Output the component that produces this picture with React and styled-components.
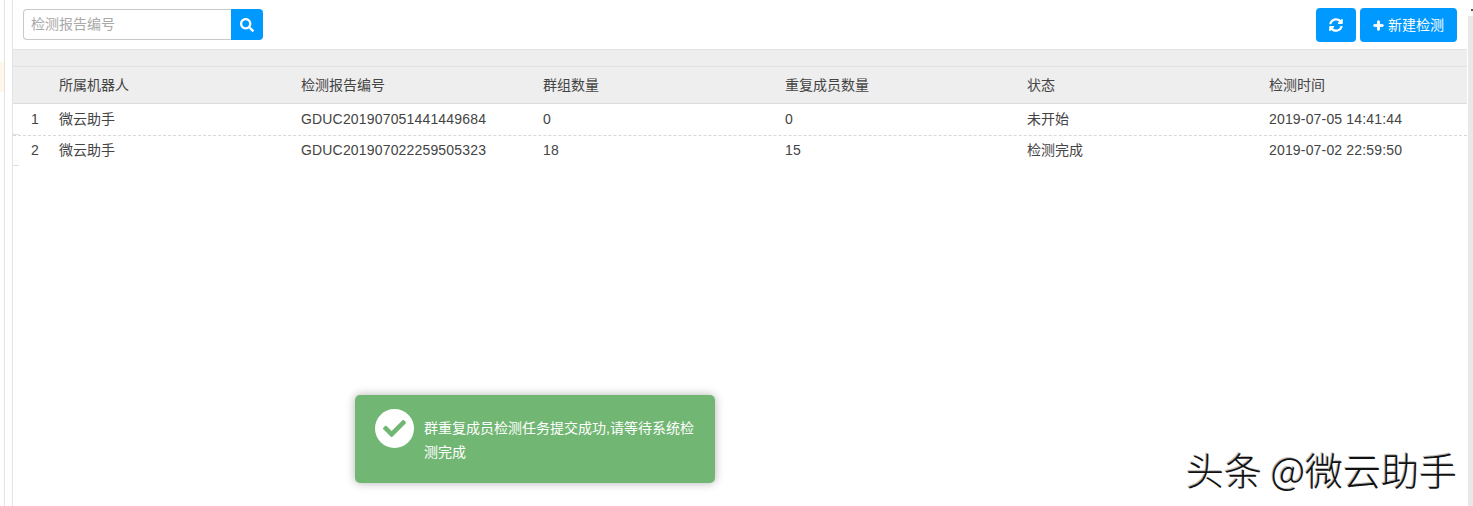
import React from 'react'
import styled, { createGlobalStyle } from 'styled-components'
import { FaSearch, FaSyncAlt, FaPlus, FaCheck } from 'react-icons/fa'

const GlobalStyle = createGlobalStyle`
  html, body {
    margin: 0;
    padding: 0;
    height: 100%;
    overflow: hidden;
    background: #fff;
  }
  body {
    font-family: "Liberation Sans", "Noto Sans CJK SC", sans-serif;
    font-size: 14px;
    color: #444;
  }
`

const Page = styled.div`
  position: relative;
  display: flex;
  width: 1473px;
  height: 506px;
  overflow: hidden;
`

const Gutter = styled.div`
  position: relative;
  flex: 0 0 13px;
  box-sizing: border-box;
  border-right: 1px solid #e3e3e3;
  &::before {
    content: '';
    position: absolute;
    left: 4px;
    top: 0;
    bottom: 0;
    width: 1px;
    background: #e3e3e3;
  }
  &::after {
    content: '';
    position: absolute;
    left: 0;
    top: 62px;
    width: 4px;
    height: 30px;
    background: #fff8ea;
  }
`

const Main = styled.main`
  flex: 1;
  min-width: 0;
`

const Scrollbar = styled.div`
  position: relative;
  flex: 0 0 5px;
  margin-left: 1px;
  background: #e8e8e8;
  &::before {
    content: '';
    position: absolute;
    left: 0;
    right: 0;
    top: 0;
    height: 16px;
    background: #fff;
  }
  &::after {
    content: '';
    position: absolute;
    right: 0;
    top: 9px;
    width: 2px;
    height: 2px;
    background: #555;
  }
`

const Toolbar = styled.div`
  box-sizing: border-box;
  height: 50px;
  padding: 8px 10px 0 10px;
  display: flex;
  justify-content: space-between;
  align-items: flex-start;
  border-bottom: 1px solid #e2e2e2;
`

const SearchBox = styled.div`
  display: flex;
  margin-top: 1px;
  width: 240px;
  height: 31px;
`

const SearchInput = styled.input`
  box-sizing: border-box;
  flex: 1;
  min-width: 0;
  height: 31px;
  padding: 0 7px 2px;
  border: 1px solid #c9c9c9;
  border-right: none;
  border-radius: 4px 0 0 4px;
  outline: none;
  font: inherit;
  font-size: 14px;
  color: #444;
  &::placeholder {
    color: #a9a9a9;
    opacity: 1;
  }
`

const SearchButton = styled.button`
  flex: 0 0 32px;
  height: 31px;
  padding: 0;
  border: none;
  border-radius: 0 4px 4px 0;
  background: #0099ff;
  color: #fff;
  font-size: 14px;
  display: flex;
  align-items: center;
  justify-content: center;
`

const Actions = styled.div`
  display: flex;
  gap: 4px;
`

const ActionButton = styled.button`
  box-sizing: border-box;
  height: 34px;
  width: ${props => props.$width};
  padding: 0;
  border: none;
  border-radius: 4px;
  background: #0099ff;
  color: #fff;
  font: inherit;
  font-size: 14px;
  display: flex;
  align-items: center;
  justify-content: center;
  gap: 4px;
`

const ButtonLabel = styled.span`
  padding-bottom: 2px;
`

const Band = styled.div`
  box-sizing: border-box;
  height: 17px;
  background: #eeeeee;
  border-bottom: 1px solid #e2e2e2;
`

const Row = styled.div`
  display: grid;
  grid-template-columns: 46px repeat(5, 242px) 1fr;
  align-items: center;
  box-sizing: border-box;
  height: ${props => props.$height};
  padding-bottom: ${props => props.$head ? '0' : '2px'};
  background: ${props => props.$head ? '#eeeeee' : '#fff'};
  border-bottom: ${props => props.$head ? '1px solid #dcdcdc' : props.$last ? 'none' : '1px dashed #d8d8d8'};
`

const Cell = styled.div`
  white-space: nowrap;
  color: #444;
  letter-spacing: ${props => props.$latin ? '0.17px' : '0'};
  padding-bottom: ${props => props.$latin ? '0' : '2px'};
`

const IndexCell = styled(Cell)`
  padding-left: 18px;
`

const Toast = styled.div`
  position: absolute;
  left: 355px;
  top: 395px;
  box-sizing: border-box;
  width: 360px;
  height: 88px;
  padding: 14px 20px;
  display: flex;
  gap: 10px;
  background: #72b674;
  border-radius: 5px;
  box-shadow: 0 0 10px rgba(0, 0, 0, 0.3);
  color: #fff;
  font-size: 14px;
  line-height: 24px;
`

const ToastIcon = styled.div`
  flex: 0 0 39px;
  height: 39px;
  border-radius: 50%;
  background: #fff;
  color: #72b674;
  font-size: 23px;
  display: flex;
  align-items: center;
  justify-content: center;
`

const ToastText = styled.div`
  width: 272px;
  padding-top: 7px;
`

const Watermark = styled.div`
  position: absolute;
  left: 1186px;
  top: 447px;
  font-family: "Noto Sans CJK SC", sans-serif;
  font-size: 38px;
  line-height: 44px;
  font-weight: 300;
  color: #111;
  white-space: nowrap;
  text-shadow: 1px 1px 0 #fff, -1px -1px 0 #bbb;
`

const Tick = styled.div`
  position: absolute;
  left: 13px;
  top: ${props => props.$top};
  width: 6px;
  height: 1px;
  background: #e0e0e0;
`

const columns = ['所属机器人', '检测报告编号', '群组数量', '重复成员数量', '状态', '检测时间']

const rows = [
  ['1', '微云助手', 'GDUC201907051441449684', '0', '0', '未开始', '2019-07-05 14:41:44'],
  ['2', '微云助手', 'GDUC201907022259505323', '18', '15', '检测完成', '2019-07-02 22:59:50'],
]

const isLatin = v => /^[\x20-\x7e]+$/.test(v)

const App = () => (
  <Page>
    <GlobalStyle />
    <Gutter />
    <Main>
      <Toolbar>
        <SearchBox>
          <SearchInput placeholder="检测报告编号" />
          <SearchButton><FaSearch /></SearchButton>
        </SearchBox>
        <Actions>
          <ActionButton $width="40px"><FaSyncAlt size={14} /></ActionButton>
          <ActionButton $width="97px">
            <FaPlus size={11} stroke="currentColor" strokeWidth={40} />
            <ButtonLabel>新建检测</ButtonLabel>
          </ActionButton>
        </Actions>
      </Toolbar>
      <Band />
      <Row $head $height="37px">
        <Cell />
        {columns.map(c => <Cell key={c}>{c}</Cell>)}
      </Row>
      {rows.map((r, i) => (
        <Row key={r[0]} $height={i === 0 ? '32px' : '30px'} $last={i === rows.length - 1}>
          <IndexCell $latin>{r[0]}</IndexCell>
          {r.slice(1).map((v, j) => <Cell key={j} $latin={isLatin(v)}>{v}</Cell>)}
        </Row>
      ))}
    </Main>
    <Scrollbar />
    <Tick $top="134px" />
    <Tick $top="165px" />
    <Toast>
      <ToastIcon><FaCheck /></ToastIcon>
      <ToastText>群重复成员检测任务提交成功,请等待系统检测完成</ToastText>
    </Toast>
    <Watermark>头条 @微云助手</Watermark>
  </Page>
)

export default App
